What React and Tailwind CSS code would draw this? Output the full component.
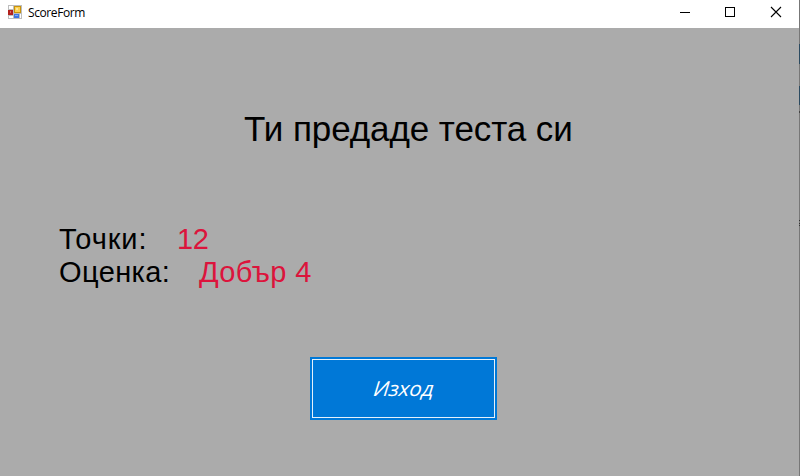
function FormIcon() {
  return (
    <svg width="14" height="14" viewBox="0 0 14 14" shapeRendering="crispEdges" className="shrink-0">
      <rect width="14" height="14" fill="#bdbdbd" />
      <rect x="1" y="1" width="4" height="3" fill="#fff" />
      <rect x="1" y="11" width="4" height="2" fill="#fff" />
      <rect x="12" y="9" width="1" height="4" fill="#fff" />
      <rect x="0" y="5" width="5" height="5" fill="#b3201c" />
      <rect x="2" y="6" width="1" height="2" fill="#e0685c" />
      <rect x="6" y="1" width="7" height="7" fill="#c8920c" />
      <rect x="7" y="2" width="5" height="5" fill="#fbd050" />
      <rect x="8" y="3" width="2" height="2" fill="#fde79a" />
      <rect x="6" y="9" width="5" height="4" fill="#3d74e0" />
      <rect x="7" y="10" width="3" height="1" fill="#7fabf5" />
    </svg>
  );
}

function TitleBar() {
  return (
    <header className="flex h-7 items-start bg-white pl-2">
      <div className="flex pt-[5px]">
        <FormIcon />
        <span className="ml-[6px] whitespace-nowrap font-['Open_Sans',sans-serif] text-[12px] leading-[16px] tracking-[-0.4px] text-black">
          ScoreForm
        </span>
      </div>
      <div className="ml-auto flex">
        <svg width="45" height="24" viewBox="0 0 45 24" shapeRendering="crispEdges">
          <path d="M19 12.5h10" stroke="#000" />
        </svg>
        <svg width="46" height="24" viewBox="0 0 46 24" shapeRendering="crispEdges">
          <rect x="19.5" y="7.5" width="9" height="9" fill="none" stroke="#000" />
        </svg>
        <svg width="47" height="24" viewBox="0 0 47 24">
          <path d="M19 7l10 10M29 7L19 17" stroke="#000" strokeWidth="1.1" />
        </svg>
      </div>
    </header>
  );
}

function ScreenEdge() {
  return (
    <div className="flex w-px flex-col bg-[#777777]">
      <div className="mt-[44px] h-5 bg-[#2b4a60]" />
      <div className="mt-[22px] h-[19px] bg-[#2b4a60]" />
      <div className="mt-[6px] h-[2px] bg-[#444]" />
      <div className="mt-[107px] h-px bg-[#333]" />
      <div className="mt-[2px] h-px bg-[#333]" />
      <div className="mt-px h-px bg-[#333]" />
    </div>
  );
}

export default function App() {
  return (
    <div className="flex h-[476px] w-[800px] overflow-hidden bg-[#ababab] font-['Liberation_Sans',Arial,sans-serif] text-black">
      <div className="flex w-[799px] flex-col">
        <TitleBar />
        <main className="flex flex-col">
          <h1 className="mt-[81px] pl-[244px] whitespace-nowrap text-[35px] leading-[40px] tracking-[-0.08px]">
            Ти предаде теста си
          </h1>
          <div className="mt-[74px] flex flex-col whitespace-nowrap pl-[59px] text-[29px] leading-[33px]">
            <div className="flex">
              <span className="w-[118px] tracking-[0.9px]">Точки:</span>
              <span className="tracking-[-0.4px] text-[#dc143c]">12</span>
            </div>
            <div className="flex">
              <span className="w-[140px] tracking-[0.4px]">Оценка:</span>
              <span className="tracking-[0.35px] text-[#dc143c]">Добър 4</span>
            </div>
          </div>
          <button className="ml-[310px] mt-[68px] flex h-[63px] w-[187px] bg-[#0078d7] p-[2px]">
            <span className="flex h-full w-full items-center justify-center border border-[#e5f1fb] font-['Open_Sans',sans-serif] text-[20.5px] font-medium leading-none text-white">
              <span className="ml-[2px] inline-block -skew-x-[17deg]">Изход</span>
            </span>
          </button>
        </main>
      </div>
      <ScreenEdge />
    </div>
  );
}
